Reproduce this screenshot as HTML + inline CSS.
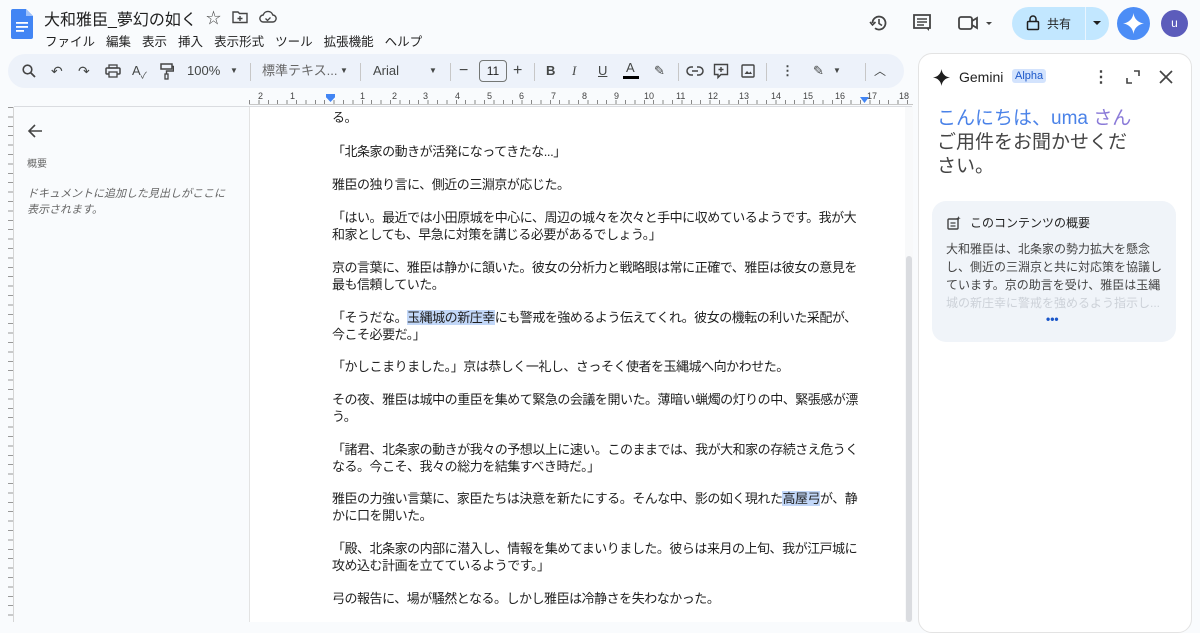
<!DOCTYPE html>
<html><head><meta charset="utf-8"><style>
*{margin:0;padding:0;box-sizing:border-box}
body{width:1200px;height:622px;overflow:hidden;background:#f9fbfd;font-family:"Liberation Sans","Noto Sans CJK JP",sans-serif;color:#1f1f1f;position:relative}
.abs{position:absolute}
.menu span{margin-right:11px}
.tb{position:absolute;left:8px;top:54px;width:896px;height:34px;background:#edf2fa;border-radius:17px}
.ti{position:absolute;top:0;height:34px;line-height:34px;font-size:13px;color:#444746}
.sep{position:absolute;top:9px;width:1px;height:18px;background:#c7c7c7}
.doc{position:absolute;left:249px;top:107px;width:656px;height:515px;background:#fff;border-left:1px solid #e3e3e3}
.p{position:absolute;left:82px;font-size:13px;line-height:17px;letter-spacing:-0.48px;color:#1f1f1f;white-space:nowrap}
.hl{background:#c2d7f8}
</style></head><body>
<svg class="abs" style="left:11px;top:9px" width="22" height="30" viewBox="0 0 22 30"><path d="M2 0h13l7 7v21a2 2 0 0 1-2 2H2a2 2 0 0 1-2-2V2a2 2 0 0 1 2-2z" fill="#4285f4"/><path d="M15 0v7h7z" fill="#a1c2fa"/><rect x="5" y="13" width="12" height="1.8" fill="#fff"/><rect x="5" y="17" width="12" height="1.8" fill="#fff"/><rect x="5" y="21" width="8" height="1.8" fill="#fff"/></svg>
<div class="abs" style="left:44px;top:6px;font-size:16px;color:#1f1f1f">大和雅臣_夢幻の如く</div>
<div class="abs" style="left:206px;top:7px;font-size:15px;color:#444">☆</div>
<svg class="abs" style="left:232px;top:10px" width="16" height="14"><path d="M1 2h5l1.5 1.5H15v9H1z" fill="none" stroke="#444" stroke-width="1.4"/><path d="M8 6v5M5.5 8.5h5" stroke="#444" stroke-width="1.4"/></svg>
<svg class="abs" style="left:259px;top:10px" width="18" height="14"><path d="M4.5 12a3.5 3.5 0 0 1-.3-7A5 5 0 0 1 13.8 5a3.5 3.5 0 0 1-.3 7z" fill="none" stroke="#444" stroke-width="1.4"/><path d="M6.5 8.5l2 2 3-3" fill="none" stroke="#444" stroke-width="1.3"/></svg>
<div class="abs menu" style="left:45px;top:31px;font-size:12.5px;color:#1f1f1f"><span>ファイル</span><span>編集</span><span>表示</span><span>挿入</span><span>表示形式</span><span>ツール</span><span>拡張機能</span><span>ヘルプ</span></div>
<svg class="abs" style="left:869px;top:13px" width="20" height="20" viewBox="0 0 20 20"><path d="M3.5 10A6.5 6.5 0 1 1 6 15.2" fill="none" stroke="#444" stroke-width="1.8"/><path d="M1 9l2.5 3 3-3" fill="none" stroke="#444" stroke-width="1.6"/><path d="M10 6v4.5l3 2" fill="none" stroke="#444" stroke-width="1.6"/></svg>
<svg class="abs" style="left:912px;top:13px" width="20" height="20"><path d="M2 2h16v13H2z" fill="none" stroke="#444" stroke-width="1.8"/><path d="M5 6h10M5 9h10M5 12h7" stroke="#444" stroke-width="1.5"/><path d="M14 15l3 3v-3" fill="#444"/></svg>
<svg class="abs" style="left:957px;top:14px" width="36" height="18"><rect x="2" y="3" width="13" height="12" rx="2" fill="none" stroke="#444" stroke-width="1.8"/><path d="M15 7l5-3v10l-5-3" fill="none" stroke="#444" stroke-width="1.8"/><path d="M29 8l3 3 3-3z" fill="#444"/></svg>
<div class="abs" style="left:1012px;top:7px;width:97px;height:33px;background:#c2e7ff;border-radius:17px"></div>
<div class="abs" style="left:1085px;top:7px;width:1px;height:33px;background:#e9f5ff"></div>
<svg class="abs" style="left:1026px;top:15px" width="14" height="16"><rect x="1.5" y="6.5" width="11" height="8" rx="1" fill="none" stroke="#1f1f1f" stroke-width="1.5"/><path d="M4 6.5V4a3 3 0 0 1 6 0v2.5" fill="none" stroke="#1f1f1f" stroke-width="1.5"/></svg>
<div class="abs" style="left:1047px;top:15px;font-size:12px;color:#1f1f1f">共有</div>
<svg class="abs" style="left:1093px;top:21px" width="8" height="5"><path d="M0 0h8L4 4z" fill="#1f1f1f"/></svg>
<div class="abs" style="left:1117px;top:7px;width:33px;height:33px;border-radius:50%;background:#4c8df6"></div>
<svg class="abs" style="left:1123px;top:13px" width="21" height="21" viewBox="0 0 20 20"><path d="M10 0C10.6 5.5 14.5 9.4 20 10 14.5 10.6 10.6 14.5 10 20 9.4 14.5 5.5 10.6 0 10 5.5 9.4 9.4 5.5 10 0z" fill="#fff"/></svg>
<div class="abs" style="left:1161px;top:10px;width:27px;height:27px;border-radius:50%;background:#5c5cbb;color:#fff;font-size:12px;text-align:center;line-height:26px">u</div>
<div class="tb">
<svg class="ti" style="left:14px;top:10px" width="14" height="14"><circle cx="5.5" cy="5.5" r="4.3" fill="none" stroke="#444" stroke-width="1.6"/><path d="M8.5 8.5L13 13" stroke="#444" stroke-width="1.8"/></svg>
<span class="ti" style="left:43px;font-size:14px">↶</span>
<span class="ti" style="left:70px;font-size:14px">↷</span>
<svg class="ti" style="left:97px;top:10px" width="16" height="14"><rect x="1" y="4" width="14" height="6" rx="1" fill="none" stroke="#444" stroke-width="1.5"/><rect x="4" y="1" width="8" height="3" fill="none" stroke="#444" stroke-width="1.3"/><rect x="4" y="8" width="8" height="5" fill="#edf2fa" stroke="#444" stroke-width="1.3"/></svg>
<span class="ti" style="left:124px;font-size:13px">A<sub style="font-size:9px">✓</sub></span>
<svg class="ti" style="left:152px;top:9px" width="14" height="17"><rect x="1" y="1" width="11" height="5" fill="none" stroke="#444" stroke-width="1.5"/><path d="M12 3.5h1.5V8H6.5v3" fill="none" stroke="#444" stroke-width="1.4"/><rect x="5" y="11" width="3" height="5" fill="none" stroke="#444" stroke-width="1.3"/></svg>
<span class="ti" style="left:179px">100%</span><span class="ti" style="left:222px;font-size:8px">▼</span>
<div class="sep" style="left:242px"></div>
<span class="ti" style="left:254px;color:#666">標準テキス...</span><span class="ti" style="left:332px;font-size:8px">▼</span>
<div class="sep" style="left:352px"></div>
<span class="ti" style="left:365px">Arial</span><span class="ti" style="left:421px;font-size:8px">▼</span>
<div class="sep" style="left:442px"></div>
<span class="ti" style="left:451px;font-size:16px">−</span>
<div class="abs" style="left:471px;top:6px;width:28px;height:22px;border:1px solid #747775;border-radius:4px;font-size:12px;text-align:center;line-height:20px;color:#1f1f1f">11</div>
<span class="ti" style="left:505px;font-size:16px">+</span>
<div class="sep" style="left:526px"></div>
<span class="ti" style="left:538px;font-weight:bold">B</span>
<span class="ti" style="left:564px;font-style:italic;font-family:'Liberation Serif'">I</span>
<span class="ti" style="left:590px;text-decoration:underline">U</span>
<span class="ti" style="left:618px;top:-3px">A</span><div class="abs" style="left:615px;top:22px;width:16px;height:3px;background:#000"></div>
<span class="ti" style="left:646px">✎</span>
<div class="sep" style="left:670px"></div>
<svg class="ti" style="left:678px;top:11px" width="18" height="12"><path d="M7 2H5a4 4 0 0 0 0 8h2M11 2h2a4 4 0 0 1 0 8h-2M6 6h6" fill="none" stroke="#444" stroke-width="1.5"/></svg>
<svg class="ti" style="left:705px;top:9px" width="16" height="16"><path d="M1.5 1.5h13v10H8l-3 3v-3H1.5z" fill="none" stroke="#444" stroke-width="1.4"/><path d="M8 4v5M5.5 6.5h5" stroke="#444" stroke-width="1.4"/></svg>
<svg class="ti" style="left:733px;top:10px" width="14" height="14"><rect x="1" y="1" width="12" height="12" rx="1" fill="none" stroke="#444" stroke-width="1.4"/><path d="M3.5 10l2.5-3 2 2 1.5-1.5 1.5 2.5z" fill="#444"/></svg>
<div class="sep" style="left:758px"></div>
<span class="ti" style="left:773px;font-weight:bold">⋮</span>
<span class="ti" style="left:805px">✎</span><span class="ti" style="left:825px;font-size:8px">▼</span>
<div class="sep" style="left:857px"></div>
<span class="ti" style="left:866px;font-size:12px">︿</span>
</div>
<div class="abs" style="left:249px;top:91px;width:664px;height:15px;font-size:9px;color:#444">
<div class="abs" style="left:0;top:13px;width:664px;height:1px;background:#c7c7c7"></div>
<div class="abs" style="left:0;top:9px;width:664px;height:4px;background:repeating-linear-gradient(90deg,#888 0 1px,transparent 1px 9.4px)"></div>
<div class="abs" style="left:9px;top:0">2</div><div class="abs" style="left:41px;top:0">1</div>
<div class="abs" style="left:77px;top:3px;width:9px;height:8px;background:#4285f4;clip-path:polygon(0 0,100% 0,100% 40%,50% 100%,0 40%)"></div>
<div class="abs" style="left:111px;top:0">1</div><div class="abs" style="left:143px;top:0">2</div><div class="abs" style="left:174px;top:0">3</div><div class="abs" style="left:206px;top:0">4</div><div class="abs" style="left:238px;top:0">5</div><div class="abs" style="left:270px;top:0">6</div><div class="abs" style="left:302px;top:0">7</div><div class="abs" style="left:333px;top:0">8</div><div class="abs" style="left:365px;top:0">9</div><div class="abs" style="left:395px;top:0">10</div><div class="abs" style="left:427px;top:0">11</div><div class="abs" style="left:459px;top:0">12</div><div class="abs" style="left:490px;top:0">13</div><div class="abs" style="left:522px;top:0">14</div><div class="abs" style="left:554px;top:0">15</div><div class="abs" style="left:586px;top:0">16</div><div class="abs" style="left:618px;top:0">17</div><div class="abs" style="left:650px;top:0">18</div>
<div class="abs" style="left:611px;top:6px;width:9px;height:6px;background:#4285f4;clip-path:polygon(0 0,100% 0,50% 100%)"></div>
</div>
<div class="abs" style="left:0;top:107px;width:14px;height:515px;border-right:1px solid #d5d5d5;background:repeating-linear-gradient(180deg,#999 0 1px,transparent 1px 9.4px) 8px 0/6px 100% no-repeat"></div>
<div class="abs" style="left:14px;top:106px;width:898px;height:1px;background:#dadce0"></div>
<svg class="abs" style="left:27px;top:123px" width="16" height="16"><path d="M15 8H2M8 2L2 8l6 6" fill="none" stroke="#444" stroke-width="1.6"/></svg>
<div class="abs" style="left:27px;top:155px;font-size:10px;color:#666">概要</div>
<div class="abs" style="left:27px;top:186px;font-size:11px;line-height:16px;color:#666;font-style:italic">ドキュメントに追加した見出しがここに<br>表示されます。</div>
<div class="doc">
<div class="p" style="top:2px">る。</div>
<div class="p" style="top:36px">「北条家の動きが活発になってきたな...」</div>
<div class="p" style="top:69px">雅臣の独り言に、側近の三淵京が応じた。</div>
<div class="p" style="top:102px">「はい。最近では小田原城を中心に、周辺の城々を次々と手中に収めているようです。我が大<br>和家としても、早急に対策を講じる必要があるでしょう。」</div>
<div class="p" style="top:152px">京の言葉に、雅臣は静かに頷いた。彼女の分析力と戦略眼は常に正確で、雅臣は彼女の意見を<br>最も信頼していた。</div>
<div class="p" style="top:202px">「そうだな。<span class="hl">玉縄城の新庄幸</span>にも警戒を強めるよう伝えてくれ。彼女の機転の利いた采配が、<br>今こそ必要だ。」</div>
<div class="p" style="top:251px">「かしこまりました。」京は恭しく一礼し、さっそく使者を玉縄城へ向かわせた。</div>
<div class="p" style="top:284px">その夜、雅臣は城中の重臣を集めて緊急の会議を開いた。薄暗い蝋燭の灯りの中、緊張感が漂<br>う。</div>
<div class="p" style="top:334px">「諸君、北条家の動きが我々の予想以上に速い。このままでは、我が大和家の存続さえ危うく<br>なる。今こそ、我々の総力を結集すべき時だ。」</div>
<div class="p" style="top:383px">雅臣の力強い言葉に、家臣たちは決意を新たにする。そんな中、影の如く現れた<span class="hl">高屋弓</span>が、静<br>かに口を開いた。</div>
<div class="p" style="top:433px">「殿、北条家の内部に潜入し、情報を集めてまいりました。彼らは来月の上旬、我が江戸城に<br>攻め込む計画を立てているようです。」</div>
<div class="p" style="top:483px">弓の報告に、場が騒然となる。しかし雅臣は冷静さを失わなかった。</div>
</div>
<div class="abs" style="left:905px;top:107px;width:8px;height:515px;background:#f8f9fa"></div>
<div class="abs" style="left:906px;top:256px;width:6px;height:366px;background:#dadce0;border-radius:3px"></div>
<div class="abs" style="left:918px;top:53px;width:274px;height:580px;background:#fff;border:1px solid #e3e3e3;border-radius:14px"></div>
<svg class="abs" style="left:933px;top:69px" width="17" height="17" viewBox="0 0 20 20"><path d="M10 0C10.6 5.5 14.5 9.4 20 10 14.5 10.6 10.6 14.5 10 20 9.4 14.5 5.5 10.6 0 10 5.5 9.4 9.4 5.5 10 0z" fill="#1f1f1f"/></svg>
<div class="abs" style="left:959px;top:69px;font-size:14px;color:#1f1f1f">Gemini</div>
<div class="abs" style="left:1012px;top:69px;font-size:11px;color:#1a56c9;background:#d3e3fd;padding:1px 3px;border-radius:3px">Alpha</div>
<div class="abs" style="left:1093px;top:67px;font-size:16px;font-weight:bold;color:#444">⋮</div>
<svg class="abs" style="left:1126px;top:70px" width="14" height="14"><path d="M1 8v5h5M8 1h5v5" fill="none" stroke="#444" stroke-width="1.6"/></svg>
<svg class="abs" style="left:1159px;top:70px" width="14" height="14"><path d="M1 1l12 12M13 1L1 13" stroke="#444" stroke-width="1.7"/></svg>
<div class="abs" style="left:937px;top:107px;font-size:19px;line-height:24px;color:#444"><span style="color:#4a82e8">こんにちは、uma</span> <span style="color:#8a7ad8">さん</span><br>ご用件をお聞かせくだ<br>さい。</div>
<div class="abs" style="left:932px;top:201px;width:244px;height:141px;background:#f0f4f9;border-radius:14px"></div>
<svg class="abs" style="left:947px;top:216px" width="14" height="14"><rect x="1" y="3" width="10" height="10" rx="1" fill="none" stroke="#444" stroke-width="1.4"/><path d="M3.5 7h5M3.5 10h5" stroke="#444" stroke-width="1.2"/><path d="M11.5 0l.6 1.6 1.6.6-1.6.6-.6 1.6-.6-1.6-1.6-.6 1.6-.6z" fill="#444"/></svg>
<div class="abs" style="left:970px;top:214px;font-size:12px;color:#1f1f1f">このコンテンツの概要</div>
<div class="abs" style="left:946px;top:240px;font-size:12px;line-height:18px;color:#444;white-space:nowrap">大和雅臣は、北条家の勢力拡大を懸念<br>し、側近の三淵京と共に対応策を協議し<br>ています。京の助言を受け、雅臣は玉縄<br><span style="color:#ccd1d8">城の新庄幸に警戒を強めるよう指示し...</span></div>
<div class="abs" style="left:1046px;top:312px;font-size:12px;font-weight:bold;color:#1a56c9;letter-spacing:0">•••</div>
</body></html>
